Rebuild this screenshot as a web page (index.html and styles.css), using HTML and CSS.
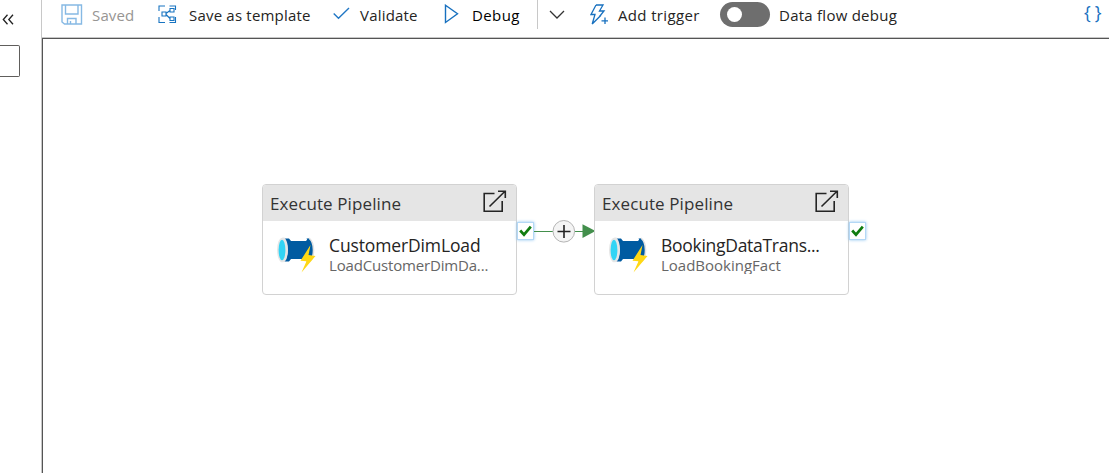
FILE: index.html
```html
<!DOCTYPE html>
<html lang="en">
<head>
<meta charset="utf-8">
<title>Pipeline editor</title>
<link rel="stylesheet" href="styles.css">
</head>
<body>
<svg class="defs" width="0" height="0" aria-hidden="true">
  <symbol id="pipeline" viewBox="0 0 40 38" overflow="visible">
    <path d="M6 1.500H12L14 4H29L31 1.500H32Q36 5 36 13T32 24.500H31L29 22H14L12 24.500H6Z" fill="#005ba1"/>
    <path d="M29.500 1.500H32.500Q36.500 5 36.500 13T32.500 24.500H29.500Q32.500 20 32.500 13T29.500 1.500Z" fill="#005ba1"/>
    <path d="M32 1Q36.500 5 36.500 13T33 24.500" fill="none" stroke="#e2e2e2" stroke-width="1.600"/>
    <path d="M5.500 .5H7.500Q11 5 11 13T7.500 25H5.500Z" fill="#e6e6e6"/>
    <ellipse cx="5.300" cy="13" rx="5.300" ry="12.300" fill="#e6e6e6"/>
    <ellipse cx="5" cy="13" rx="3.400" ry="10.300" fill="#32d4f5"/>
    <path d="M33.500 8L23.500 23.800L29.500 24.200L24.500 35.500L38.500 19L31.500 18Z" fill="#ffd814"/>
  </symbol>
  <symbol id="open" viewBox="0 0 24 24">
    <path d="M11.500 3.500H1.200V21.300H19.200V11M6.500 16.500L22 1.200M15 1.200H22.300V8" fill="none" stroke="#252525" stroke-width="1.600"/>
  </symbol>
</svg>
<div class="app">
  <aside class="side">
    <svg class="collapse" width="13" height="12" viewBox="0 0 13 12"><path d="M5.500 .8L1.300 5.500L5.500 10.200M11 .8L6.800 5.500L11 10.200" fill="none" stroke="#222" stroke-width="1.300"/></svg>
    <div class="search"></div>
  </aside>
  <main class="editor">
    <header class="toolbar">
      <svg class="i-save" width="22" height="22" viewBox="0 0 22 22"><path d="M1 1H20.500V20H3.500L1 18ZM4.500 1V10H17V1M6.500 20V14.500H15V20M9.500 17V20" fill="none" stroke="#86b9e4" stroke-width="1.400"/></svg>
      <span class="t-saved">Saved</span>
      <svg class="i-template" width="20" height="19" viewBox="0 0 20 19"><path d="M7 1H1V6M1 12V17.500H7M11.500 1H17.500V5M17.500 12V17.500H11.500M4 7H8V11H4ZM12 3.500H16V7H12ZM12 12H16V15.500H12ZM8 8.500L12 5.500M8 9.500L12 13.500" fill="none" stroke="#1874c1" stroke-width="1.100"/></svg>
      <span class="t-template">Save as template</span>
      <svg class="i-check" width="17" height="13" viewBox="0 0 17 13"><path d="M.7 6.500L5.500 11.200L16 1" fill="none" stroke="#2177c5" stroke-width="1.400"/></svg>
      <span class="t-validate">Validate</span>
      <svg class="i-play" width="15" height="20" viewBox="0 0 15 20"><path d="M1.500 1.200L13.500 9.800L1.500 18.500Z" fill="none" stroke="#1770bf" stroke-width="1.400"/></svg>
      <span class="t-debug">Debug</span>
      <i class="divider"></i>
      <svg class="i-chevron" width="16" height="10" viewBox="0 0 16 10"><path d="M1 1L8 8L15 1" fill="none" stroke="#333" stroke-width="1.300"/></svg>
      <svg class="i-trigger" width="20" height="22" viewBox="0 0 20 22"><path d="M6 1L1 10.500H5L2.200 20L11 11.200M6 1H13L9.500 7H14L9.500 12.500M15 13.500V20M11.500 16.800H18" fill="none" stroke="#1770bf" stroke-width="1.300"/></svg>
      <span class="t-trigger">Add trigger</span>
      <span class="toggle"><i></i></span>
      <span class="t-flow">Data flow debug</span>
      <span class="braces">{}</span>
    </header>
    <section class="canvas">
      <article class="node first">
        <header class="head"><span class="kind">Execute Pipeline</span><svg class="open" width="24" height="24"><use href="#open"/></svg></header>
        <div class="body"><svg class="pipe" width="40" height="38"><use href="#pipeline"/></svg>
          <div class="info"><div class="name n1">CustomerDimLoad</div><div class="ref r1">LoadCustomerDimDa...</div></div></div>
        <span class="port"><svg width="13" height="12" viewBox="0 0 13 12"><path d="M1.200 5.500L5 9.700L11.800 1.700" fill="none" stroke="#107c10" stroke-width="2.700"/></svg></span>
      </article>
      <svg class="link" width="62" height="26" viewBox="0 0 62 26"><path d="M0 13.500H50" stroke="#438f4c" stroke-width="1.200"/><path d="M48.500 6.300L61.500 13L48.500 20Z" fill="#438f4c"/><circle cx="29.800" cy="13.300" r="10.800" fill="#f4f4f4" stroke="#b5b5b5"/><path d="M23.500 13.500H36.500M30 7V20" stroke="#222" stroke-width="1.600"/></svg>
      <article class="node second">
        <header class="head"><span class="kind">Execute Pipeline</span><svg class="open" width="24" height="24"><use href="#open"/></svg></header>
        <div class="body"><svg class="pipe" width="40" height="38"><use href="#pipeline"/></svg>
          <div class="info"><div class="name n2">BookingDataTrans...</div><div class="ref r2">LoadBookingFact</div></div></div>
        <span class="port"><svg width="13" height="12" viewBox="0 0 13 12"><path d="M1.200 5.500L5 9.700L11.800 1.700" fill="none" stroke="#107c10" stroke-width="2.700"/></svg></span>
      </article>
    </section>
  </main>
</div>
</body>
</html>
```
FILE: styles.css
```css
* { box-sizing: border-box; }
body { margin: 0; background: #fff; font-family: "Open Sans", "Noto Sans", sans-serif; color: #252423; overflow: hidden; }
.defs { position: absolute; }
.app { display: flex; width: 1109px; height: 473px; }
.side { width: 41px; flex: none; }
.collapse { display: block; margin: 14px 0 0 2px; }
.search { width: 20px; height: 32px; margin-top: 19px; border: 1px solid #605e5c; border-left: 0; border-radius: 0 2px 2px 0; }
.editor { flex: 1; display: flex; flex-direction: column; border-left: 1px solid #c8c8c8; min-width: 0; }
.toolbar { height: 38px; flex: none; display: flex; align-items: flex-start; border-bottom: 1px solid #c8c8c8; font-size: 15px; line-height: 20px; white-space: nowrap; }
.toolbar > * { flex: none; }
.toolbar > span { margin-top: 5px; }
.i-save { margin: 4px 0 0 19px; }
.toolbar .t-saved { width: 43px; margin-left: 9px; color: #979593; letter-spacing: .15px; }
.i-template { margin: 5px 0 0 23px; }
.t-template { width: 121px; margin-left: 11px; letter-spacing: .2px; }
.i-check { margin: 7px 0 0 23px; }
.t-validate { width: 58px; margin-left: 10px; letter-spacing: .2px; }
.i-play { margin: 4px 0 0 26px; }
.t-debug { width: 49px; margin-left: 13px; color: #000; letter-spacing: .4px; }
.divider { width: 1px; height: 29px; margin-left: 16px; background: #c8c8c8; }
.i-chevron { margin: 10px 0 0 11px; }
.i-trigger { margin: 4px 0 0 25px; }
.t-trigger { width: 83px; margin-left: 8px; letter-spacing: .35px; }
.toolbar .toggle { width: 50px; height: 25px; margin: 2px 0 0 19px; padding: 5px 7px; border-radius: 13px; background: #6e6e6e; }
.toggle i { display: block; width: 15px; height: 15px; border-radius: 50%; background: #fff; }
.t-flow { width: 119px; margin-left: 9px; letter-spacing: .25px; }
.toolbar .braces { margin: 2px 0 0 186px; color: #1770bf; font-size: 18px; letter-spacing: 4px; }
.canvas { position: relative; flex: 1; border-top: 1px solid #555; border-left: 1px solid #555; }
.node { position: absolute; top: 145px; width: 255px; height: 111px; border: 1px solid #d2d2d2; border-radius: 4px; background: #fff; }
.first { left: 219px; }
.second { left: 551px; }
.head { display: flex; justify-content: space-between; height: 36px; padding: 5px 9px 0 7px; background: #e5e5e5; border-radius: 3px 3px 0 0; }
.kind { font-size: 17px; line-height: 27px; white-space: nowrap; color: #333; letter-spacing: .1px; }
.body { display: flex; padding: 15px 0 0 14px; }
.pipe { flex: none; margin-top: 1px; overflow: visible; }
.info { margin: -1px 0 0 12px; white-space: nowrap; }
.name { font-size: 17.500px; line-height: 20px; color: #252423; }
.n1 { letter-spacing: -.13px; }
.n2 { letter-spacing: -.28px; }
.ref { height: 19px; font-size: 15px; line-height: 20px; color: #666; overflow: hidden; }
.r1 { letter-spacing: -.17px; }
.port { position: absolute; left: 254px; top: 37px; width: 17px; height: 18px; display: flex; align-items: center; justify-content: center; background: #fff; border: 1px solid #b4d8f6; box-shadow: 0 0 3px #8fc4f0; }
.link { position: absolute; left: 491px; top: 179px; }
```
